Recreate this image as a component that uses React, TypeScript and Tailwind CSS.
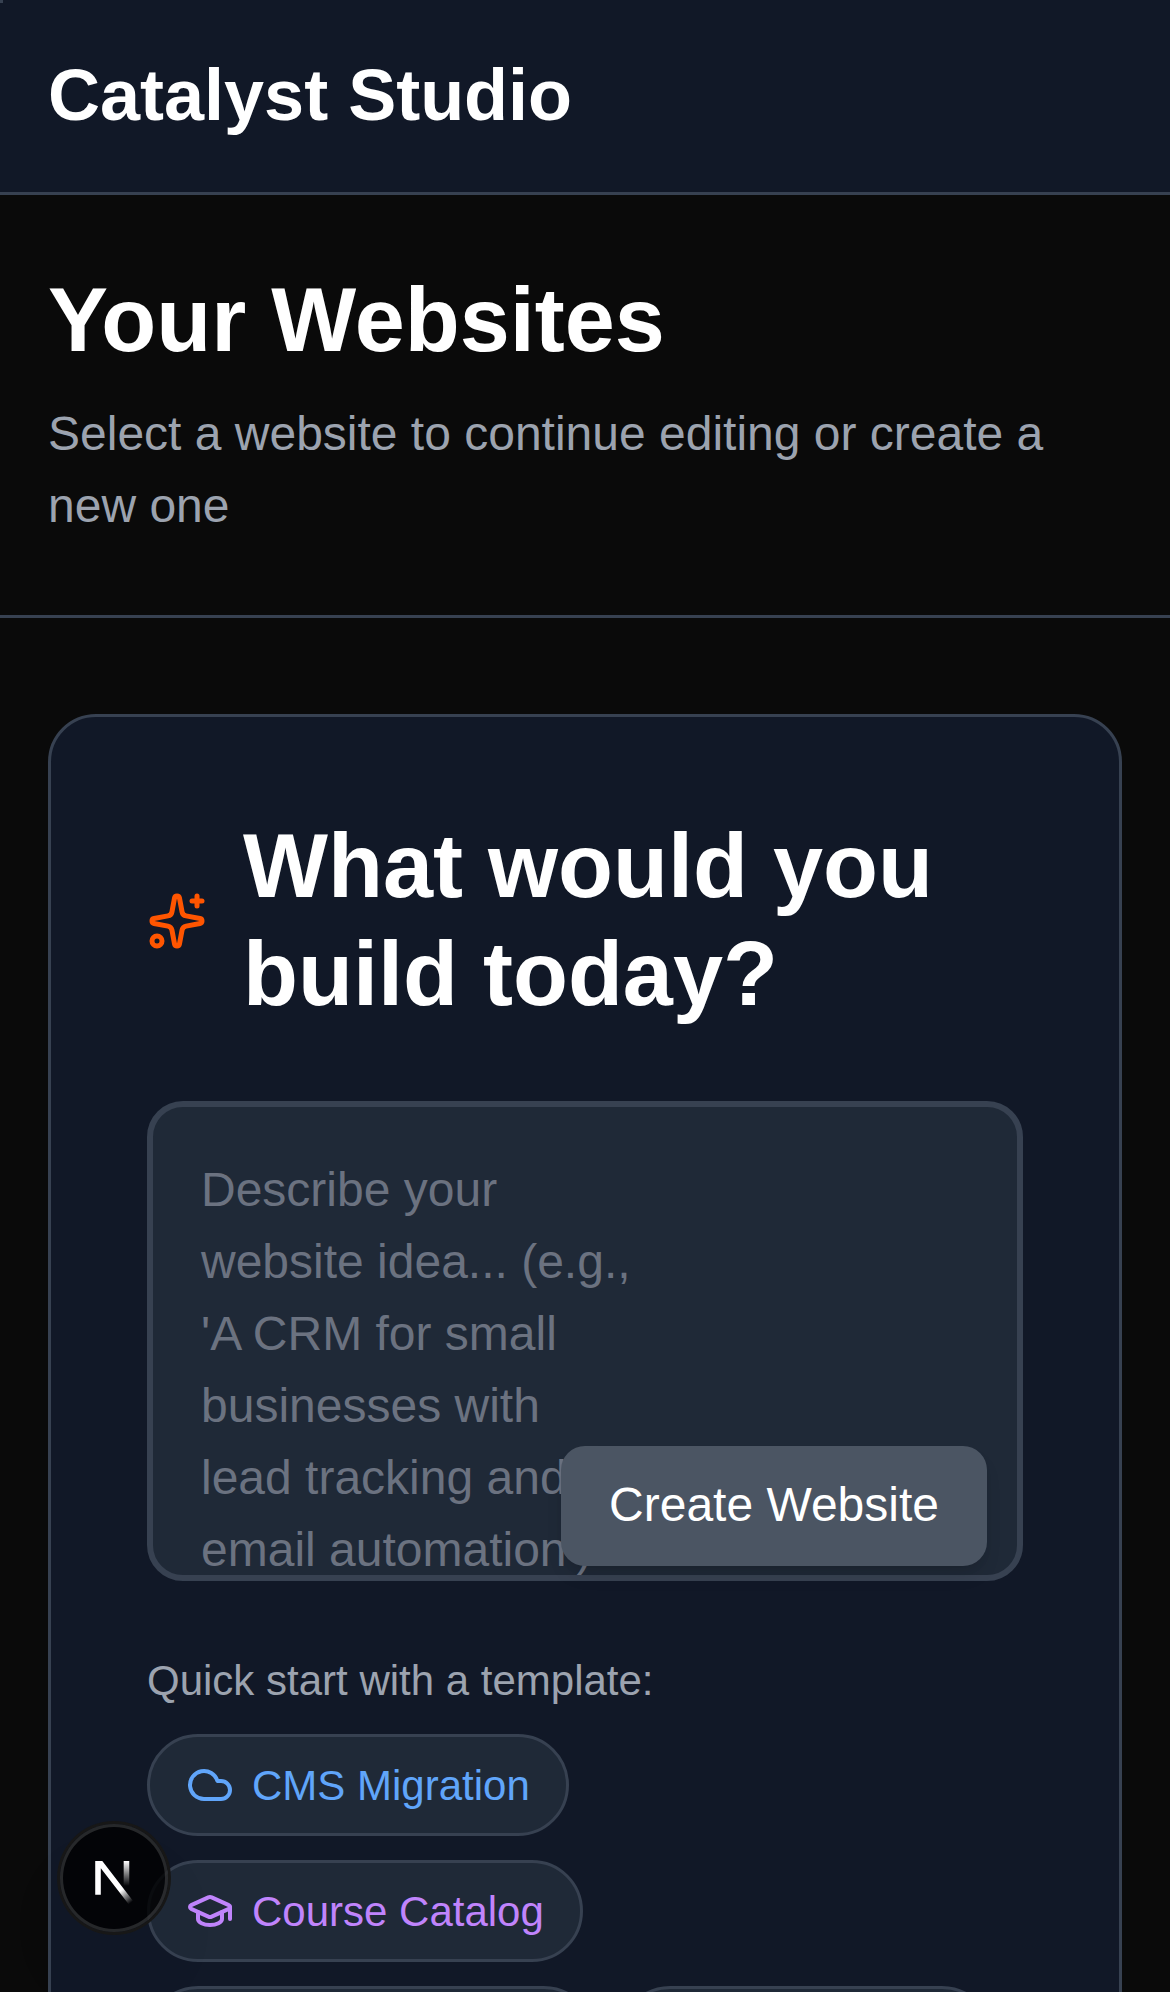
import { Cloud, GraduationCap, Sparkles } from "lucide-react";
import type { ReactNode } from "react";

function Pill({ color, icon, children }: { color: string; icon: ReactNode; children: ReactNode }) {
  return (
    <button
      className={`flex h-[102px] items-center gap-[18px] rounded-full border-[3px] border-[#374151] bg-[#1f2937] px-9 text-[42px] leading-[60px] whitespace-nowrap ${color}`}
    >
      {icon}
      <span className="translate-y-px">{children}</span>
    </button>
  );
}

function DevBadge() {
  return (
    <div className="absolute bottom-[60px] left-[60px] flex size-[108px] items-center justify-center rounded-full bg-black/80 shadow-[0_0_0_3px_#171717,inset_0_0_0_3px_rgba(255,255,255,0.14),0_48px_96px_-24px_rgba(0,0,0,0.12)] backdrop-blur-[144px]">
      <svg width="120" height="120" viewBox="0 0 40 40" fill="none" className="shrink-0">
        <g transform="translate(12.33, 13)" clipPath="url(#nClip)">
          <path d="M13.3 15.2 L2.34 1 V12.6" stroke="url(#nDiag)" strokeWidth="1.86" />
          <path d="M11.825 1.33 V13.1" stroke="url(#nStem)" strokeWidth="1.86" />
        </g>
        <defs>
          <clipPath id="nClip">
            <rect x="0" y="1.33" width="18" height="16" />
          </clipPath>
          <linearGradient id="nDiag" x1="9.95555" y1="11.1226" x2="15.4778" y2="17.9671" gradientUnits="userSpaceOnUse">
            <stop stopColor="white" />
            <stop offset="0.604072" stopColor="white" stopOpacity="0" />
            <stop offset="1" stopColor="white" stopOpacity="0" />
          </linearGradient>
          <linearGradient id="nStem" x1="11.8222" y1="1.40039" x2="11.791" y2="9.62542" gradientUnits="userSpaceOnUse">
            <stop stopColor="white" />
            <stop offset="1" stopColor="white" stopOpacity="0" />
          </linearGradient>
        </defs>
      </svg>
    </div>
  );
}

export default function App() {
  return (
    <div className="relative h-[1992px] w-full overflow-hidden bg-[#0a0a0a] font-['Liberation_Sans',Arial,sans-serif] text-white">
      <div className="absolute top-0 left-0 size-[3px] bg-[#374151]" />
      <header className="flex h-[195px] items-center border-b-[3px] border-[#374151] bg-[#111827] px-12 pb-[2px]">
        <span className="text-[72px] leading-[96px] font-bold">Catalyst Studio</span>
      </header>

      <section className="border-b-[3px] border-[#374151] px-12 pt-[71px] pb-[73px]">
        <h1 className="text-[90px] leading-[108px] font-bold">Your Websites</h1>
        <p className="mt-6 text-[48px] leading-[72px] text-[#9ca3af]">
          Select a website to continue editing or create a new one
        </p>
      </section>

      <main className="px-12 pt-24">
        <div className="h-[1500px] rounded-[48px] border-[3px] border-[#374151] bg-[#111827] p-24">
          <div className="flex items-center gap-9">
            <Sparkles size={60} className="shrink-0 text-[#ff5500]" />
            <h2 className="-translate-y-px text-[90px] leading-[108px] font-bold">What would you build today?</h2>
          </div>

          <div className="relative mt-[72px] h-[480px]">
            <div className="h-full overflow-hidden rounded-[36px] border-[6px] border-[#374151] bg-[#1f2937] px-12 pt-[47px] pr-[384px] text-[48px] leading-[72px] text-[#6b7280]">
              Describe your website idea... (e.g., 'A CRM for small businesses with lead tracking and email automation')
            </div>
            <button className="absolute right-9 bottom-[15px] h-[120px] w-[426px] rounded-[24px] bg-[#4b5563] pb-[2px] text-[48px] leading-[72px] whitespace-nowrap shadow-[0_12px_18px_-3px_rgba(0,0,0,0.1),0_6px_12px_-6px_rgba(0,0,0,0.1)]">
              Create Website
            </button>
          </div>

          <p className="mt-[70px] text-[42px] leading-[60px] text-[#9ca3af]">Quick start with a template:</p>
          <div className="mt-[23px] flex flex-col items-start gap-6">
            <Pill color="text-[#60a5fa]" icon={<Cloud size={48} />}>
              CMS Migration
            </Pill>
            <Pill color="text-[#c084fc]" icon={<GraduationCap size={48} />}>
              Course Catalog
            </Pill>
            <div className="flex gap-6">
              <div className="h-[102px] w-[448px] rounded-full border-[3px] border-[#374151] bg-[#1f2937]" />
              <div className="h-[102px] w-[374px] rounded-full border-[3px] border-[#374151] bg-[#1f2937]" />
            </div>
          </div>
        </div>
      </main>

      <DevBadge />
    </div>
  );
}
